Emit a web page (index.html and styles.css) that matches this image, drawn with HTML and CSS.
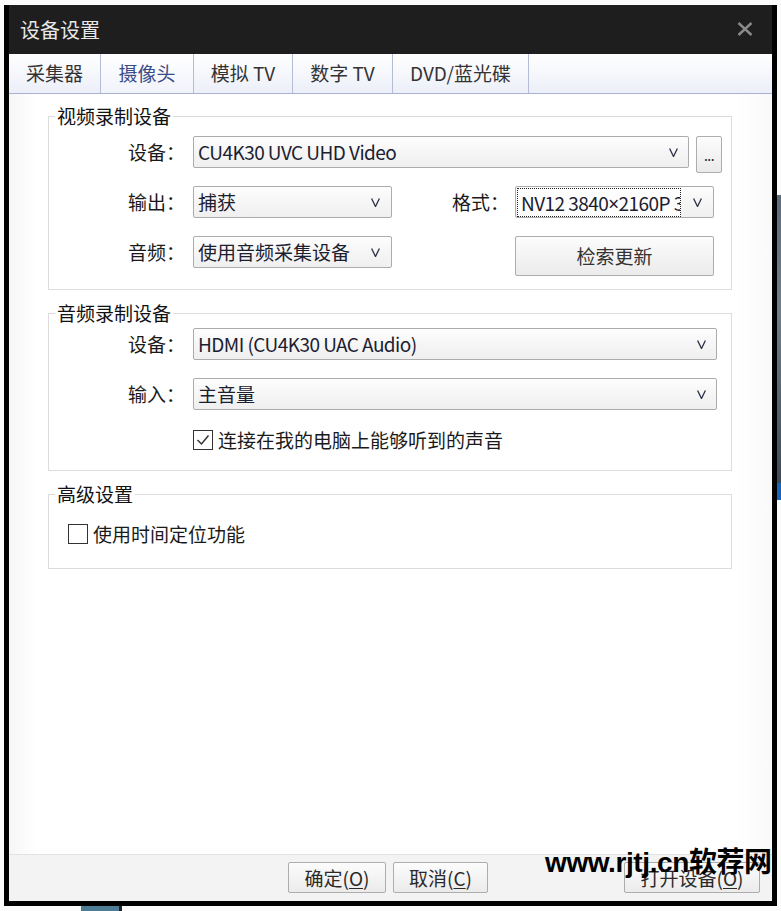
FILE: index.html
```html
<!DOCTYPE html>
<html lang="zh-CN">
<head>
<meta charset="utf-8">
<title>设备设置</title>
<link rel="stylesheet" href="styles.css">
</head>
<body>
<div class="dialog">
  <div class="titlebar">
    <span class="title">设备设置</span>
    <svg class="close" width="16" height="14" viewBox="0 0 16 14"><path d="M1.5 1 L14.5 13 M14.5 1 L1.5 13" stroke="#8a8a8a" stroke-width="2.4" fill="none"/></svg>
  </div>
  <div class="tabs">
    <div class="tab t1">采集器</div>
    <div class="tab t2 active">摄像头</div>
    <div class="tab t3">模拟 TV</div>
    <div class="tab t4">数字 TV</div>
    <div class="tab t5">DVD/蓝光碟</div>
  </div>
  <div class="content">
    <fieldset class="group g1">
      <legend>视频录制设备</legend>
      <div class="row">
        <span class="lbl">设备：</span>
        <div class="sel w-dev"><span class="val lat">CU4K30 UVC UHD Video</span><svg class="arrow" width="9" height="9" viewBox="0 0 9 9"><polyline points="0.6,0.5 4.5,8.5 8.4,0.5" fill="none" stroke="#2a2f45" stroke-width="1.3"/></svg></div>
        <div class="btn more">...</div>
      </div>
      <div class="row">
        <span class="lbl">输出：</span>
        <div class="sel w-half"><span class="val">捕获</span><svg class="arrow" width="9" height="9" viewBox="0 0 9 9"><polyline points="0.6,0.5 4.5,8.5 8.4,0.5" fill="none" stroke="#2a2f45" stroke-width="1.3"/></svg></div>
        <span class="lbl lbl-fmt">格式：</span>
        <div class="sel w-half fmt"><span class="focus lat">NV12 3840<span class="times">×</span>2160P 30.00</span><svg class="arrow" width="9" height="9" viewBox="0 0 9 9"><polyline points="0.6,0.5 4.5,8.5 8.4,0.5" fill="none" stroke="#2a2f45" stroke-width="1.3"/></svg></div>
      </div>
      <div class="row row-last">
        <span class="lbl">音频：</span>
        <div class="sel w-half"><span class="val">使用音频采集设备</span><svg class="arrow" width="9" height="9" viewBox="0 0 9 9"><polyline points="0.6,0.5 4.5,8.5 8.4,0.5" fill="none" stroke="#2a2f45" stroke-width="1.3"/></svg></div>
        <div class="btn refresh">检索更新</div>
      </div>
    </fieldset>

    <fieldset class="group g2">
      <legend>音频录制设备</legend>
      <div class="row">
        <span class="lbl">设备：</span>
        <div class="sel w-audio"><span class="val lat">HDMI (CU4K30 UAC Audio)</span><svg class="arrow" width="9" height="9" viewBox="0 0 9 9"><polyline points="0.6,0.5 4.5,8.5 8.4,0.5" fill="none" stroke="#2a2f45" stroke-width="1.3"/></svg></div>
      </div>
      <div class="row">
        <span class="lbl">输入：</span>
        <div class="sel w-audio"><span class="val">主音量</span><svg class="arrow" width="9" height="9" viewBox="0 0 9 9"><polyline points="0.6,0.5 4.5,8.5 8.4,0.5" fill="none" stroke="#2a2f45" stroke-width="1.3"/></svg></div>
      </div>
      <div class="check-row listen">
        <span class="box"><svg width="18" height="18" viewBox="0 0 18 18"><polyline points="3.5,9 7.5,13 14.5,4.5" fill="none" stroke="#333" stroke-width="1.5"/></svg></span>
        <span class="check-text">连接在我的电脑上能够听到的声音</span>
      </div>
    </fieldset>

    <fieldset class="group g3">
      <legend>高级设置</legend>
      <div class="check-row seek">
        <span class="box"></span>
        <span class="check-text">使用时间定位功能</span>
      </div>
    </fieldset>
  </div>
  <div class="footer">
    <div class="btn fbtn ok">确定(<u>O</u>)</div>
    <div class="btn fbtn cancel">取消(<u>C</u>)</div>
    <div class="btn fbtn open">打开设备(<u>O</u>)</div>
  </div>
</div>
<div class="watermark">www.rjtj.cn软荐网</div>
</body>
</html>
```

FILE: styles.css
```css
* { box-sizing: border-box; }

html, body {
  margin: 0;
  padding: 0;
}

body {
  width: 781px;
  height: 911px;
  overflow: hidden;
  position: relative;
  font-family: "Noto Sans CJK SC", "Noto Sans", sans-serif;
  font-size: 19px;
  color: #1a1a1a;
  padding: 5px 0 0 4px;
  background:
    linear-gradient(#5b6c7c, #6f7f8e 40%, #3d4b58) 777px 195px / 4px 288px no-repeat,
    linear-gradient(#1565c0, #1565c0) 777px 483px / 4px 17px no-repeat,
    linear-gradient(#4d7d94, #4d7d94) 81px 906px / 38px 5px no-repeat,
    linear-gradient(#222, #222) 119px 906px / 3px 5px no-repeat,
    #fbfbfb;
}

.dialog {
  width: 773px;
  height: 901px;
  border-left: 5px solid #000;
  border-right: 5px solid #000;
  border-bottom: 5px solid #000;
  display: flex;
  flex-direction: column;
  background: #fff;
}

/* title bar */
.titlebar {
  height: 49px;
  background: #1e1e1e;
  display: flex;
  align-items: center;
  padding-left: 11px;
  padding-right: 19px;
}
.title {
  color: #e8e8e8;
  font-size: 20px;
  line-height: 24px;
}
.close {
  margin-left: auto;
  margin-top: -1px;
}

/* tabs */
.tabs {
  height: 40px;
  display: flex;
  border-bottom: 1px solid #a9b2cf;
  background: linear-gradient(#ffffff, #eceff9);
}
.tab {
  height: 39px;
  border-right: 1px solid #b4bcd8;
  display: flex;
  align-items: center;
  justify-content: center;
  font-size: 19px;
  line-height: 24px;
  color: #333;
  padding-bottom: 1px;
}
.tab.active { color: #3b4b88; background: linear-gradient(#ffffff, #f1f3fb); }
.t1 { width: 92px; }
.t2 { width: 93px; }
.t3 { width: 99px; }
.t4 { width: 100px; }
.t5 { width: 136px; }

/* content */
.content {
  flex: 1;
  padding: 12px 40px 0 39px;
  background: linear-gradient(to right, #f6f6f6 0, #ffffff 28px, #ffffff calc(100% - 38px), #f9f9f9 100%);
}

.group {
  margin: 0;
  padding: 0;
  min-width: 0;
  border: 1px solid #dcdcdc;
}
.group legend {
  margin-left: 6px;
  padding: 0 2px;
  font-size: 19px;
  line-height: 20px;
  color: #111;
}
.g1 { padding: 10px 0 13px; }
.g2 { margin-top: 13px; padding: 5px 0 20px; }
.g3 { margin-top: 13px; padding: 20px 0 24px; }

.row {
  display: flex;
  align-items: flex-start;
  height: 50px;
}
.row-last { height: 40px; }

.lbl {
  width: 136px;
  margin-right: 8px;
  text-align: right;
  line-height: 32px;
  height: 32px;
  white-space: nowrap;
}
.lbl-fmt {
  width: 117px;
  margin-right: 6px;
}

.sel {
  height: 32px;
  border: 1px solid #acacac;
  border-radius: 2px;
  background: linear-gradient(#fdfdfd, #efefef);
  display: flex;
  align-items: center;
  padding-left: 4px;
  color: #1b2030;
}
.val {
  line-height: 30px;
  white-space: nowrap;
}
.lat { letter-spacing: -0.55px; }
.times { font-family: "Noto Sans", sans-serif; }
.arrow {
  margin-left: auto;
  margin-right: 10px;
  flex: none;
}
.w-dev { width: 496px; }
.w-half { width: 199px; }
.w-audio { width: 524px; }
.w-half .arrow { margin-right: 11px; }

.sel.fmt { padding-left: 1px; }
.focus {
  width: 164px;
  height: 29px;
  border: 1px dotted #222;
  overflow: hidden;
  white-space: nowrap;
  padding-left: 3px;
  line-height: 27px;
  background: #fdfdfd;
}

.btn {
  border: 1px solid #adadad;
  border-radius: 2px;
  background: linear-gradient(#fcfcfc, #ebebeb);
  display: flex;
  align-items: center;
  justify-content: center;
  color: #222;
  white-space: nowrap;
}
.more {
  width: 26px;
  height: 37px;
  margin-left: 7px;
  font-size: 14px;
  line-height: 14px;
  align-items: flex-end;
  padding-bottom: 10px;
  letter-spacing: -0.5px;
}
.refresh {
  width: 199px;
  height: 40px;
  margin-left: 123px;
  line-height: 24px;
  color: #333;
}

.check-row {
  display: flex;
  align-items: center;
  height: 20px;
}
.listen { margin-left: 144px; margin-top: 2px; }
.seek { margin-left: 19px; }
.box {
  width: 20px;
  height: 20px;
  border: 1px solid #333;
  background: #fff;
  display: flex;
  align-items: center;
  justify-content: center;
  flex: none;
}
.check-text {
  margin-left: 5px;
  line-height: 22px;
  white-space: nowrap;
}

/* footer */
.footer {
  height: 47px;
  border-top: 1px solid #e2e2e2;
  background: #f3f3f3;
  display: flex;
  align-items: flex-start;
  padding: 7px 12px 0 279px;
}
.fbtn {
  height: 31px;
  line-height: 24px;
  color: #2a2a2a;
}
.fbtn u { text-underline-offset: 2px; }
.ok { width: 98px; }
.cancel { width: 95px; margin-left: 7px; }
.open { width: 136px; margin-left: auto; }

/* watermark overlay */
.watermark {
  position: absolute;
  left: 545px;
  top: 849px;
  font-family: "Liberation Sans", "Noto Sans CJK SC", sans-serif;
  font-weight: bold;
  font-size: 28px;
  line-height: 28px;
  letter-spacing: -0.4px;
  color: #000;
  white-space: nowrap;
}
```
